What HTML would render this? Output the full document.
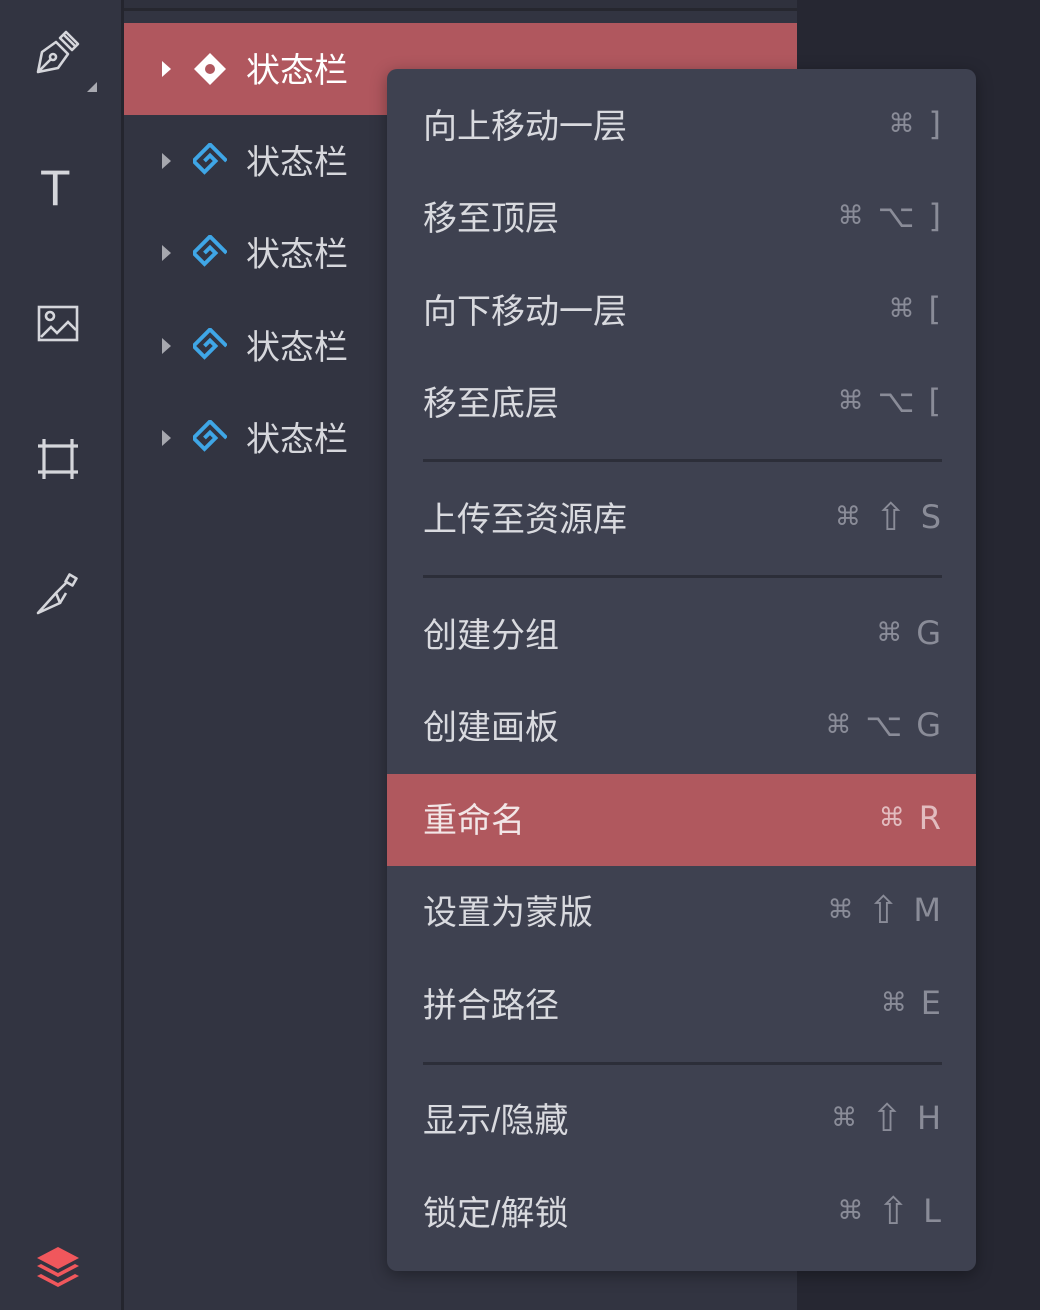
<!DOCTYPE html>
<html><head><meta charset="utf-8"><style>
*{margin:0;padding:0;box-sizing:border-box}
body{width:1040px;height:1310px;background:#262732;position:relative;overflow:hidden;font-family:"Liberation Sans","Noto Sans CJK SC",sans-serif}
.left{position:absolute;left:0;top:0;width:121px;height:1310px;background:#323441}
.div{position:absolute;left:121px;top:0;width:3px;height:1310px;background:#24252e}
.panel{position:absolute;left:124px;top:0;width:673px;height:1310px;background:#323441}
.topstrip{position:absolute;left:124px;top:0;width:673px;height:11px;background:#2f313d;border-bottom:3px solid #26272f}
.row{position:absolute;left:124px;width:673px;height:92px}
.row .tri{position:absolute;left:38px;top:38px;width:0;height:0;border-top:8px solid transparent;border-bottom:8px solid transparent;border-left:9px solid #a6a7ae}
.row .lbl{position:absolute;left:122px;top:20px;font-size:34px;color:#d6d7dc}
.row svg{position:absolute;left:69px;top:28px}
.sel{background:#b0575e}
.sel .tri{border-left-color:#fff}.sel .lbl{color:#fff}
.menu{position:absolute;left:387px;top:69px;width:589px;height:1202px;background:#3e4150;border-radius:10px;box-shadow:0 4px 16px rgba(0,0,0,.35)}
.it{position:absolute;left:0;width:589px;height:92px;color:#d9dadf;font-size:34px}
.it .t{position:absolute;left:36px;top:19px}
.it .k{position:absolute;right:35px;top:24px;color:#8a8c98;font-size:32px;font-family:"DejaVu Sans","Liberation Sans",sans-serif;white-space:nowrap;display:flex;align-items:center;gap:14px;height:40px}
.it .k .c{font-size:26px}
.it .k .s{font-size:38px}
.hl{background:#b0585e;color:#f2e6e7}
.hl .k{color:#e2bcbf}
.sep{position:absolute;left:36px;width:519px;height:3px;background:#2c2e39}
</style></head><body>
<div class="left"></div><div class="div"></div><div class="panel"></div><div class="topstrip"></div>

<svg style="position:absolute;left:34px;top:28px" width="50" height="50" viewBox="0 0 50 50" fill="none" stroke="#d5d6db" stroke-width="2.6" stroke-linejoin="round">
<path d="M4 44 L8 24 L22 14 L34 26 L24 40 Z"/><path d="M4 44 L17 31"/><circle cx="19" cy="29" r="3"/><path d="M26 10 L32 4 L44 16 L38 22 Z"/><path d="M30 7 L41 18"/>
</svg>
<div style="position:absolute;left:87px;top:82px;width:0;height:0;border-left:10px solid transparent;border-bottom:10px solid #a9aab1"></div>
<div style="position:absolute;left:40px;top:160px;font-size:50px;color:#d5d6db;font-family:'Liberation Sans',sans-serif;line-height:56px">T</div>
<svg style="position:absolute;left:37px;top:305px" width="42" height="38" viewBox="0 0 42 38" fill="none" stroke="#d5d6db" stroke-width="2.6"><rect x="2" y="2" width="38" height="33"/><circle cx="13" cy="11" r="4"/><path d="M4 32 L14 22 L20 28 L31 17 L39 25"/></svg>
<svg style="position:absolute;left:36px;top:437px" width="44" height="44" viewBox="0 0 44 44" fill="none" stroke="#d5d6db" stroke-width="3.2"><path d="M8 2 V42 M36 2 V42 M2 9 H42 M2 35 H42"/></svg>
<svg style="position:absolute;left:36px;top:573px" width="44" height="44" viewBox="0 0 44 44" fill="none" stroke="#d5d6db" stroke-width="2.6" stroke-linejoin="round"><path d="M2 40 L20 20 L24 30 Z"/><path d="M20 20 L30 10 M24 30 L30 20"/><rect x="31" y="3" width="8" height="8" transform="rotate(30 35 7)"/></svg>
<svg style="position:absolute;left:35px;top:1245px" width="46" height="46" viewBox="0 0 46 46" fill="#f0575c"><path d="M23 2 L44 13 L23 24 L2 13 Z"/><path d="M2 21 L6 19 L23 28 L40 19 L44 21 L23 32 Z"/><path d="M2 31 L6 29 L23 38 L40 29 L44 31 L23 42 Z"/></svg>

<div class="row sel" style="top:23px"><div class="tri"></div>
<svg width="34" height="36" viewBox="-17 -18 34 36"><path d="M0 -16 L16 0 L0 16 L-16 0 Z" fill="#fff"/><circle r="5" fill="#b0575e"/></svg>
<div class="lbl">状态栏</div></div>
<div class="row" style="top:115px"><div class="tri"></div><svg width="34" height="36" viewBox="-17 -18 34 36"><path d="M-3 3 L-3 -3 L3 -3 L3 9 L-9 9 L-9 -9 L9 -9" fill="none" stroke="#3fa6e6" stroke-width="3" transform="rotate(45) scale(1.3)"/></svg><div class="lbl">状态栏</div></div>
<div class="row" style="top:207px"><div class="tri"></div><svg width="34" height="36" viewBox="-17 -18 34 36"><path d="M-3 3 L-3 -3 L3 -3 L3 9 L-9 9 L-9 -9 L9 -9" fill="none" stroke="#3fa6e6" stroke-width="3" transform="rotate(45) scale(1.3)"/></svg><div class="lbl">状态栏</div></div>
<div class="row" style="top:300px"><div class="tri"></div><svg width="34" height="36" viewBox="-17 -18 34 36"><path d="M-3 3 L-3 -3 L3 -3 L3 9 L-9 9 L-9 -9 L9 -9" fill="none" stroke="#3fa6e6" stroke-width="3" transform="rotate(45) scale(1.3)"/></svg><div class="lbl">状态栏</div></div>
<div class="row" style="top:392px"><div class="tri"></div><svg width="34" height="36" viewBox="-17 -18 34 36"><path d="M-3 3 L-3 -3 L3 -3 L3 9 L-9 9 L-9 -9 L9 -9" fill="none" stroke="#3fa6e6" stroke-width="3" transform="rotate(45) scale(1.3)"/></svg><div class="lbl">状态栏</div></div>

<div class="menu">
<div class="it" style="top:11px"><div class="t">向上移动一层</div><div class="k"><span class="c">⌘</span><span>]</span></div></div>
<div class="it" style="top:103px"><div class="t">移至顶层</div><div class="k"><span class="c">⌘</span><span>⌥</span><span>]</span></div></div>
<div class="it" style="top:196px"><div class="t">向下移动一层</div><div class="k"><span class="c">⌘</span><span>[</span></div></div>
<div class="it" style="top:288px"><div class="t">移至底层</div><div class="k"><span class="c">⌘</span><span>⌥</span><span>[</span></div></div>
<div class="sep" style="top:390px"></div>
<div class="it" style="top:404px"><div class="t">上传至资源库</div><div class="k"><span class="c">⌘</span><span class="s">⇧</span><span>S</span></div></div>
<div class="sep" style="top:506px"></div>
<div class="it" style="top:520px"><div class="t">创建分组</div><div class="k"><span class="c">⌘</span><span>G</span></div></div>
<div class="it" style="top:612px"><div class="t">创建画板</div><div class="k"><span class="c">⌘</span><span>⌥</span><span>G</span></div></div>
<div class="it hl" style="top:705px"><div class="t">重命名</div><div class="k"><span class="c">⌘</span><span>R</span></div></div>
<div class="it" style="top:797px"><div class="t">设置为蒙版</div><div class="k"><span class="c">⌘</span><span class="s">⇧</span><span>M</span></div></div>
<div class="it" style="top:890px"><div class="t">拼合路径</div><div class="k"><span class="c">⌘</span><span>E</span></div></div>
<div class="sep" style="top:993px"></div>
<div class="it" style="top:1005px"><div class="t">显示/隐藏</div><div class="k"><span class="c">⌘</span><span class="s">⇧</span><span>H</span></div></div>
<div class="it" style="top:1098px"><div class="t">锁定/解锁</div><div class="k"><span class="c">⌘</span><span class="s">⇧</span><span>L</span></div></div>
</div>
</body></html>
